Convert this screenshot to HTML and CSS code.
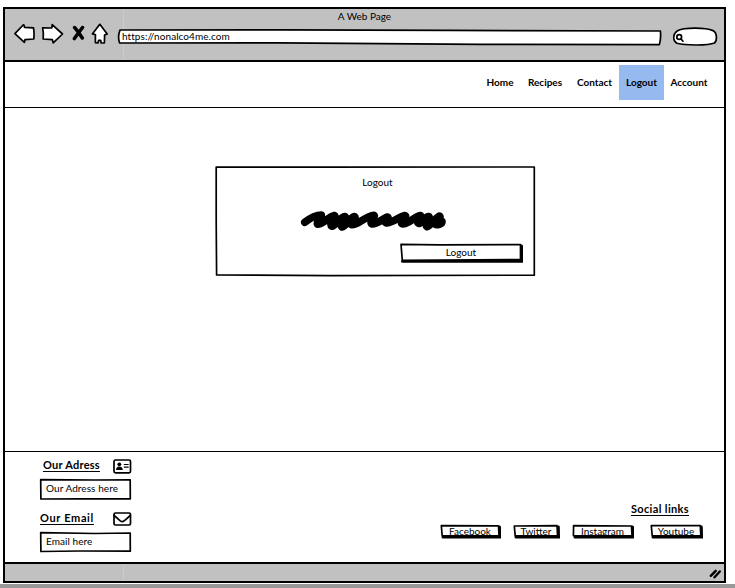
FILE: index.html
```html
<!DOCTYPE html>
<html lang="en">
<head>
<meta charset="utf-8">
<title>A Web Page</title>
<link rel="stylesheet" href="styles.css">
</head>
<body>
<div class="window">
  <header class="chrome">
    <div class="title">A Web Page</div>
    <div class="toolbar">
      <svg class="ink back" viewBox="14 22 22 23"><path d="M14.9 33.7 L23.2 25 Q24.4 24.4 24.4 27.3 L33.5 27.8 Q34.4 33 33.8 39 L25 39.7 L24.4 42.3 Z"/></svg>
      <svg class="ink forward" viewBox="41 22 23 23"><path d="M42.6 27.8 L51.8 28 L52.2 24.6 L62.5 34 L53.2 42.8 L52.3 39.6 L43.2 39 Q43.8 33 42.6 27.8 Z"/></svg>
      <svg class="ink stop" viewBox="72 22 14 23"><path d="M74.600 27.500 Q77 30 82.300 38 M82.500 27.500 Q79 32 74.400 38.600"/></svg>
      <svg class="ink home" viewBox="91 22 18 23"><path d="M99.8 24.3 L107.2 34 L104.6 35 L104.4 42.8 L101.2 43 L100.7 40.3 L98.6 40.3 L98 43 L95.4 42.7 L95.4 34.6 L92.4 34 Z"/></svg>
      <div class="url">
        <svg class="ink frame" viewBox="117 28 545 18"><path d="M120 30 L280 29.8 L450 30.4 L660.4 31 Q661.2 38 659.4 44.6 L480 44.3 L280 42.9 L119.6 43 Q117.4 37 120 30 Z"/></svg>
        <span>https://nonalco4me.com</span>
      </div>
      <svg class="ink search" viewBox="672 26 46 21"><path d="M678 30.6 C684 27.4 705 27.2 713 30.6 C717.6 33 717 41 714.5 43 C708 45.6 686 45.6 677 43.3 C672.6 40.5 672.4 34 678 30.6 Z"/><circle cx="679.2" cy="37" r="2.4"/><path d="M680.8 38.8 L683 41.2"/></svg>
    </div>
  </header>

  <nav class="nav">
    <a class="home-link">Home</a><a class="recipes">Recipes</a><a class="contact">Contact</a><a class="logout active">Logout</a><a class="account">Account</a>
  </nav>

  <main class="main">
    <section class="card">
      <svg class="ink frame" viewBox="215 165 321 112"><path d="M216.2 167 L320 167.2 L534.3 167 L534.3 275.2 L330 275.6 L216.6 275 L216.2 220 Z"/></svg>
      <h1 class="card-title">Logout</h1>
      <svg class="scribble" viewBox="300 208 148 26"><path d="M304.8 222.3 C309 219 316 215 321.300 215 C322.5 216 316 221 317.500 224.300 C322 225 328 217 334.500 215.500 C337 216 328 224 332 226.300 C335 226 340 217 345 216.500 C347 218 339 225 342 227 C346 226.500 350 217 354.500 216.500 C357 218 348 223 352 224.800 C356 226 366 216 374 215.300 C376 216 369 221 371.500 223.800 C377 225 384 217.500 387.500 217 C390 218 382 221 386.500 223 C393 223 399 216.500 405 215.500 C408 216.500 399 221 402 223.800 C408 225 414 216.500 420.500 215.500 C422 217 415 222 419 223.500 C422 223 425 216 429 216.500 C431 219 424 225 427 226.800 C431 226 437 216 439.500 216 C442 218 433 223 436 224.500 C439 225 442 224 442 221.500"/></svg>
      <button class="btn submit">
        <svg class="ink frame" viewBox="400 243 124 21"><path class="shade" d="M402.500 261.300 L521.500 261.300 L521.500 246"/><path d="M401 244.300 L440 244.800 L520.500 244.500 L520.500 259.600 L440 260 L402.300 260.300 Z"/></svg>
        <span>Logout</span>
      </button>
    </section>
  </main>

  <footer class="footer">
    <div class="details">
      <div class="row address">
        <h2>Our Adress</h2>
        <svg class="ink card-icon" viewBox="112 458 20 16"><rect x="114" y="460" width="16.500" height="12.800" rx="1.500"/><circle class="solid" cx="119.300" cy="464.300" r="1.900"/><path class="solid" d="M116 470 Q116.200 466.500 119.300 466.500 Q122.600 466.500 122.800 470 Z"/><path class="thin" d="M124.300 464.500 H128.200 M124.300 467.200 H128.200"/></svg>
      </div>
      <div class="field">
        <svg class="ink frame" viewBox="39 478 93 22"><path d="M40.700 479.700 L95 480 L130.200 479.800 L130.300 498.800 L80 498.800 L40.900 499 Z"/></svg>
        <span>Our Adress here</span>
      </div>
      <div class="row email">
        <h2>Our Email</h2>
        <svg class="ink mail-icon" viewBox="112 511 20 16"><rect x="114" y="513" width="16.500" height="12" rx="1.500"/><path d="M114.200 515.500 L120.300 520.800 Q122.200 522.300 124.200 520.800 L130.300 515.500"/></svg>
      </div>
      <div class="field">
        <svg class="ink frame" viewBox="39 531 93 22"><path d="M40.700 532.700 L95 533.500 L130.200 533 L130.300 551.200 L80 551 L40.900 551.500 Z"/></svg>
        <span>Email here</span>
      </div>
    </div>
    <div class="social">
      <h2 class="social-title">Social links</h2>
      <div class="links">
        <a class="btn facebook"><svg class="ink frame" viewBox="0 0 62 16"><path class="shade" d="M3 13 L59.500 13 L59.500 3"/><path d="M1.300 1.600 L58.500 1.800 L59 11.500 L2.200 11.800 Z"/></svg><span>Facebook</span></a>
        <a class="btn twitter"><svg class="ink frame" viewBox="0 0 48 16"><path class="shade" d="M3 13 L45.500 13 L45.300 3"/><path d="M1.300 2 L44 1.600 L44.600 11.600 L2.200 11.800 Z"/></svg><span>Twitter</span></a>
        <a class="btn instagram"><svg class="ink frame" viewBox="0 0 63 16"><path class="shade" d="M3 13 L60.500 13 L60.500 3"/><path d="M1.600 1.600 L59.500 2 L60 11.800 L1.400 11.600 Z"/></svg><span>Instagram</span></a>
        <a class="btn youtube"><svg class="ink frame" viewBox="0 0 54 16"><path class="shade" d="M3 13 L51.500 13 L51.300 3"/><path d="M1.300 1.600 L50.300 1.600 L50.800 11.600 L2.200 11.800 Z"/></svg><span>Youtube</span></a>
      </div>
    </div>
  </footer>

  <div class="status">
    <svg class="ink grip" viewBox="709 568 14 13"><path d="M711.800 575.800 L716.700 570.800 M715.500 577.300 L720.800 571.500"/></svg>
  </div>
</div>
<div class="backdrop"></div>
</body>
</html>
```
FILE: styles.css
```css
* { box-sizing: border-box; }
body {
  margin: 0;
  height: 588px;
  overflow: hidden;
  display: flex;
  flex-direction: column;
  background: #fff;
  color: #000;
  font: 10px/14px Lato, "Liberation Sans", sans-serif;
}
h1, h2 { margin: 0; }
svg { display: block; flex: none; }
.window {
  display: grid;
  grid-template-rows: 53px 46px 343px 111px 19px;
  width: 723px;
  height: 576px;
  margin: 7px 0 0 3px;
  border: 2px solid #000;
}
.chrome {
  background: linear-gradient(#cbcbcb, #cbcbcb) 118px 0 / 1px 100% no-repeat #c1c1c1;
  border-bottom: 2px solid #000;
}
.title { height: 13px; text-align: center; }
.toolbar { display: flex; align-items: center; height: 23px; padding-left: 9px; }
.ink { fill: #fff; stroke: #000; stroke-width: 1.7; stroke-linejoin: round; stroke-linecap: round; }
.frame { position: absolute; inset: 0; width: 100%; height: 100%; z-index: -1; }
.shade { fill: none; stroke-width: 3; stroke-linejoin: miter; }
.solid { fill: #000; stroke: none; }
.thin { stroke-width: 1.2; }
.back { width: 22px; height: 23px; margin-right: 5px; }
.forward { width: 23px; height: 23px; margin-right: 8px; }
.stop { width: 14px; height: 23px; margin-right: 5px; fill: none; stroke-width: 3.5; }
.home { width: 18px; height: 23px; margin-right: 8px; }
.url {
  position: relative;
  z-index: 0;
  width: 545px;
  height: 18px;
  margin: 6px 10px 0 0;
  padding: 1px 0 0 5px;
  letter-spacing: 0.06px;
}
.search { width: 46px; height: 21px; margin-top: 6px; }

.nav {
  display: flex;
  justify-content: flex-end;
  align-items: flex-start;
  padding: 3px 10px 0 0;
  border-bottom: 1.5px solid #000;
  font-weight: 700;
}
.nav a { height: 35px; line-height: 35px; text-align: center; white-space: nowrap; }
.home-link { width: 40px; }
.recipes { width: 50px; }
.contact { width: 49px; }
.logout { width: 45px; }
.account { width: 50px; }
.active { background: #95baf0; }

.main { padding: 57px 0 0 210px; }
.card {
  position: relative;
  z-index: 0;
  width: 321px;
  height: 112px;
  display: flex;
  flex-direction: column;
  align-items: center;
  padding-top: 10px;
}
.card-title { font-size: 10px; font-weight: 400; padding-left: 4px; }
.scribble {
  width: 148px;
  height: 26px;
  margin: 19px 3px 0 0;
  fill: none;
  stroke: #000;
  stroke-width: 7.6;
  stroke-linecap: round;
  stroke-linejoin: round;
}
.btn {
  position: relative;
  z-index: 0;
  display: block;
  padding: 0;
  border: 0;
  background: none;
  color: inherit;
  font: inherit;
  text-align: center;
}
.submit { align-self: flex-end; width: 124px; height: 21px; margin: 9px 12px 0 0; padding: 0 2px 4px 0; }

.footer { display: flex; justify-content: space-between; border-top: 1.5px solid #000; padding-top: 1px; }
.details { padding: 5px 0 0 34px; }
.row { display: flex; justify-content: space-between; width: 93px; }
.row h2, .social-title {
  height: 14px;
  font-size: 11px;
  line-height: 14px;
  text-decoration: underline;
  text-decoration-skip-ink: none;
  text-underline-offset: 2px;
  white-space: nowrap;
}
.address h2 { margin-left: 4px; letter-spacing: 0.25px; }
.email h2 { margin-left: 1px; letter-spacing: 0.65px; }
.card-icon, .mail-icon { width: 20px; height: 16px; }
.address { height: 20px; }
.email { height: 20px; margin-top: 11px; }
.field { position: relative; z-index: 0; width: 93px; height: 22px; padding: 3px 0 0 7px; letter-spacing: 0.07px; }
.social { padding: 49px 20px 0 0; }
.social-title { margin: 0 15px 8px 0; text-align: right; letter-spacing: 0.35px; }
.links { display: flex; }
.links .btn { height: 16px; padding-right: 2px; line-height: 15px; }
.facebook { width: 62px; margin-right: 11px; }
.twitter { width: 48px; margin-right: 11px; }
.instagram { width: 63px; margin-right: 15px; }
.youtube { width: 54px; }

.status {
  display: flex;
  justify-content: flex-end;
  padding: 4px 2px 0 0;
  background: linear-gradient(#cbcbcb, #cbcbcb) 118px 0 / 1px 100% no-repeat #c1c1c1;
  border-top: 2px solid #000;
}
.grip { width: 14px; height: 13px; stroke-width: 2.4; }
.backdrop { height: 4px; margin-top: 1px; background: #999; }
```
